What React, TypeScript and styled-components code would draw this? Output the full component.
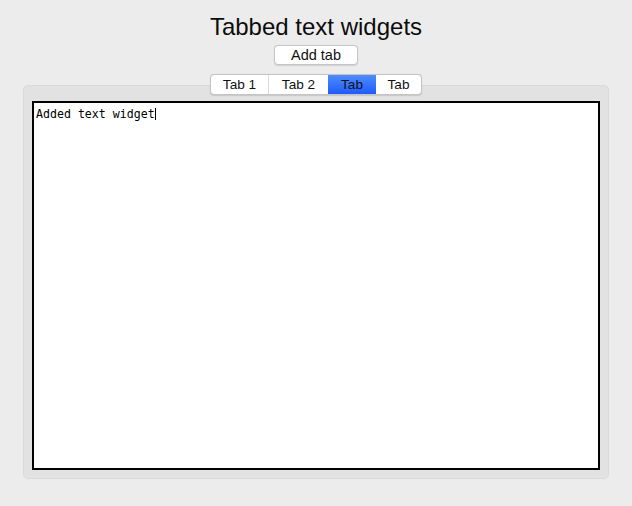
import React from "react";
import styled, { createGlobalStyle } from "styled-components";

const Global = createGlobalStyle`
  html, body { margin: 0; padding: 0; background: #ececec; }
  * { box-sizing: border-box; }
`;

const Window = styled.div`
  width: 632px;
  height: 506px;
  background: #ececec;
  display: flex;
  flex-direction: column;
  align-items: center;
  font-family: "Liberation Sans", Arial, sans-serif;
  color: #111;
  border-radius: 0 0 5px 5px;
  overflow: hidden;
`;

const Title = styled.h1`
  margin: 13px 0 0;
  font-size: 24px;
  line-height: 28px;
  font-weight: 400;
  color: #0c0c0c;
`;

const Button = styled.button`
  margin-top: 4px;
  height: 20px;
  padding: 0 16px;
  border: 1px solid #c6c6c6;
  border-radius: 4px;
  background: #fff;
  box-shadow: 0 0.5px 1px rgba(0, 0, 0, 0.12);
  font-family: "Liberation Sans", Arial, sans-serif;
  font-size: 14.5px;
  line-height: 18px;
  color: #111;
`;

const TabView = styled.div`
  margin-top: 9px;
  width: 586px;
  display: flex;
  flex-direction: column;
  align-items: center;
`;

const TabBar = styled.div`
  position: relative;
  z-index: 1;
  display: flex;
  height: 21px;
  margin-bottom: -10px;
  background: #fff;
  border: 1px solid #c4c4c4;
  border-radius: 4px;
  overflow: hidden;
  box-shadow: 0 0.5px 1px rgba(0, 0, 0, 0.12);
`;

const Tab = styled.div<{ $w: number; $active?: boolean; $divider?: boolean }>`
  width: ${(p) => p.$w}px;
  display: flex;
  align-items: center;
  justify-content: center;
  font-size: 13.6px;
  color: #111;
  border-left: ${(p) => (p.$divider ? "1px solid #dcdcdc" : "none")};
  background: ${(p) =>
    p.$active ? "linear-gradient(#4f8dff, #1f5bff)" : "transparent"};
`;

const Panel = styled.div`
  width: 586px;
  height: 394px;
  background: #e2e2e2;
  border: 1px solid #dadada;
  border-radius: 5px;
  padding: 15px 8px 8px;
`;

const TextArea = styled.div`
  width: 568px;
  height: 369px;
  background: #fff;
  border: 2px solid #000;
  padding: 4px 2px;
  font-family: "DejaVu Sans Mono", "Liberation Mono", monospace;
  font-size: 11.6px;
  line-height: 14px;
  color: #000;
`;

const Caret = styled.span`
  display: inline-block;
  width: 1px;
  height: 12px;
  background: #000;
  vertical-align: -2px;
`;

export default function App() {
  return (
    <Window>
      <Global />
      <Title>Tabbed text widgets</Title>
      <Button>Add tab</Button>
      <TabView>
        <TabBar>
          <Tab $w={57}>Tab 1</Tab>
          <Tab $w={60} $divider>Tab 2</Tab>
          <Tab $w={48} $active>Tab</Tab>
          <Tab $w={45}>Tab</Tab>
        </TabBar>
        <Panel>
          <TextArea>
            Added text widget
            <Caret />
          </TextArea>
        </Panel>
      </TabView>
    </Window>
  );
}
